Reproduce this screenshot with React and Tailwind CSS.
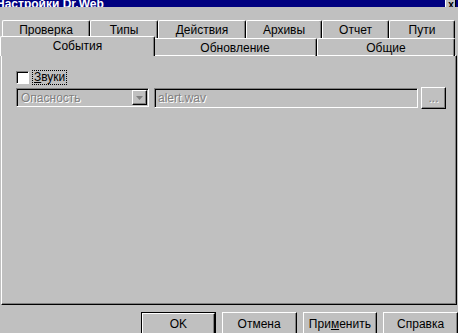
import React from 'react';

const font = { fontFamily: '"Liberation Sans", Arial, sans-serif' };

function BackTab({ label, w }) {
  return (
    <div
      className={`${w} h-[18px] flex items-center justify-center border-t border-l border-r border-t-white border-l-white border-r-black rounded-t-[2px] shadow-[inset_-1px_0_#808080] text-black`}
    >
      {label}
    </div>
  );
}

function FrontTab({ label, w, active }) {
  if (active) {
    return (
      <div
        className={`${w} h-[20px] -mt-[2px] -mx-[2px] relative z-10 bg-[#c0c0c0] flex items-center justify-center border-t border-l border-r border-t-white border-l-white border-r-black rounded-t-[2px] shadow-[inset_-1px_0_#808080] text-black`}
      >
        <span className="-mt-[2px]">{label}</span>
      </div>
    );
  }
  return (
    <div
      className={`${w} h-[18px] flex items-center justify-center border-t border-l border-r border-t-white border-l-white border-r-black rounded-t-[2px] shadow-[inset_-1px_0_#808080] text-black`}
    >
      {label}
    </div>
  );
}

function Button({ children, isDefault }) {
  return (
    <div className={`w-[75px] h-[24px] ${isDefault ? 'border border-black' : ''}`}>
      <div className="w-full h-full flex items-center justify-center border border-t-white border-l-white border-r-black border-b-black shadow-[inset_-1px_-1px_#808080] text-black">
        {children}
      </div>
    </div>
  );
}

export default function App() {
  return (
    <div className="w-[458px] h-[333px] overflow-hidden bg-[#c0c0c0] text-[12px] select-none" style={font}>
      {/* title bar */}
      <div className="h-[7px] bg-[#000080] overflow-hidden flex items-end justify-between">
        <span className="text-white font-bold text-[12px] leading-none -ml-[4px] mb-[1px] translate-y-[4px]">
          Настройки Dr.Web
        </span>
        <div className="w-[11px] h-[7px] mr-[2px] bg-[#c0c0c0] border-l border-l-white shadow-[inset_-1px_0_#000] overflow-hidden flex items-end justify-center">
          <span className="text-black font-bold text-[10px] leading-none translate-y-[3px]">x</span>
        </div>
      </div>

      {/* tabs back row */}
      <div className="mt-[13px] pl-[2px] flex">
        <BackTab label="Проверка" w="w-[88px]" />
        <BackTab label="Типы" w="w-[68px]" />
        <BackTab label="Действия" w="w-[88px]" />
        <BackTab label="Архивы" w="w-[76px]" />
        <BackTab label="Отчет" w="w-[67px]" />
        <BackTab label="Пути" w="w-[66px]" />
      </div>

      {/* tabs front row */}
      <div className="pl-[2px] flex relative z-10">
        <FrontTab label="События" w="w-[155px]" active />
        <FrontTab label="Обновление" w="w-[164px]" />
        <FrontTab label="Общие" w="w-[138px]" />
      </div>

      {/* panel */}
      <div className="ml-[1px] w-[456px] h-[250px] -mt-[1px] border border-t-white border-l-white border-r-black border-b-black shadow-[inset_-1px_-1px_#808080] pt-[15px] pl-[14px]">
        <div className="flex items-center gap-[4px]">
          <div className="w-[13px] h-[13px] bg-white border border-t-[#808080] border-l-[#808080] border-r-white border-b-white shadow-[inset_1px_1px_#000]" />
          <span className="px-[1px] outline-1 outline-dotted outline-black leading-[13px] text-black">
            <span className="underline">З</span>вуки
          </span>
        </div>

        <div className="mt-[3px] flex items-start">
          <div className="w-[133px] h-[19px] mt-[1px] border border-t-[#808080] border-l-[#808080] border-r-white border-b-white shadow-[inset_1px_1px_#000] flex items-center justify-between pl-[4px] pr-[1px]">
            <span className="text-[#808080] [text-shadow:1px_1px_#fff]">Опасность</span>
            <div className="w-[15px] h-[15px] border border-t-white border-l-white border-r-black border-b-black shadow-[inset_-1px_-1px_#808080] flex items-center justify-center">
              <svg width="7" height="4" viewBox="0 0 7 4">
                <path d="M0 0h7L3.5 4z" fill="#808080" />
              </svg>
            </div>
          </div>
          <div className="ml-[5px] w-[264px] h-[20px] mt-[1px] border border-t-[#808080] border-l-[#808080] border-r-white border-b-white shadow-[inset_1px_1px_#000] flex items-center pl-[3px]">
            <span className="text-[#808080] [text-shadow:1px_1px_#fff]">alert.wav</span>
          </div>
          <div className="ml-[3px] w-[25px] h-[22px] border border-t-white border-l-white border-r-black border-b-black shadow-[inset_-1px_-1px_#808080] flex items-center justify-center">
            <span className="text-[#808080] [text-shadow:1px_1px_#fff] leading-none">...</span>
          </div>
        </div>
      </div>

      {/* bottom buttons */}
      <div className="mt-[7px] pl-[141px] flex gap-[6px]">
        <Button isDefault>OK</Button>
        <Button>Отмена</Button>
        <Button>
          <span>
            При<span className="underline">м</span>енить
          </span>
        </Button>
        <Button>Справка</Button>
      </div>
    </div>
  );
}
